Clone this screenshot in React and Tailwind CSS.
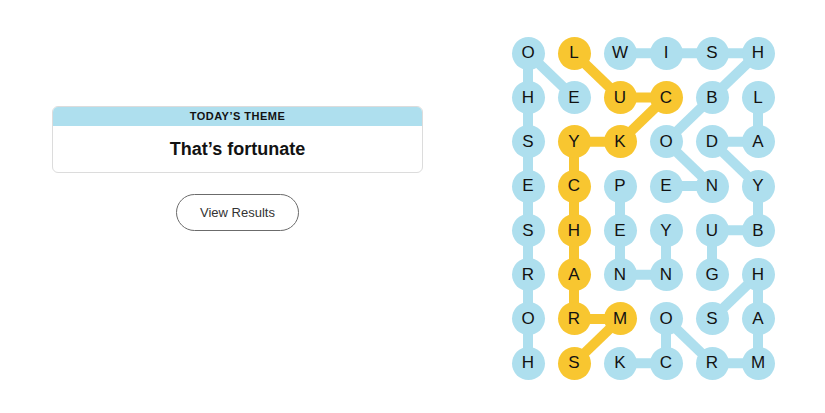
import React from "react";

const rows = ["OLWISH", "HEUCBL", "SYKODA", "ECPENY", "SHEYUB", "RANNGH", "ORMOSA", "HSKCRM"];

// cells on the spangram
const gold = new Set(["0,1", "1,2", "1,3", "2,2", "2,1", "3,1", "4,1", "5,1", "6,1", "6,2", "7,1"]);

const blueLinks = [
  [[0, 0], [1, 0]], [[1, 0], [2, 0]], [[2, 0], [3, 0]], [[3, 0], [4, 0]],
  [[4, 0], [5, 0]], [[5, 0], [6, 0]], [[6, 0], [7, 0]], [[0, 0], [1, 1]],
  [[0, 2], [0, 3]], [[0, 3], [0, 4]], [[0, 4], [0, 5]], [[0, 5], [1, 4]],
  [[1, 4], [2, 3]], [[2, 3], [3, 4]], [[3, 4], [3, 3]],
  [[1, 5], [2, 5]], [[2, 5], [2, 4]], [[2, 4], [3, 5]], [[3, 5], [4, 5]],
  [[4, 5], [4, 4]], [[4, 4], [5, 4]],
  [[3, 2], [4, 2]], [[4, 2], [5, 2]], [[5, 2], [5, 3]], [[5, 3], [4, 3]],
  [[6, 4], [5, 5]], [[5, 5], [6, 5]], [[6, 5], [7, 5]], [[7, 5], [7, 4]],
  [[7, 4], [6, 3]], [[6, 3], [7, 3]], [[7, 3], [7, 2]],
];

const goldLinks = [
  [[0, 1], [1, 2]], [[1, 2], [1, 3]], [[1, 3], [2, 2]], [[2, 2], [2, 1]],
  [[2, 1], [3, 1]], [[3, 1], [4, 1]], [[4, 1], [5, 1]], [[5, 1], [6, 1]],
  [[6, 1], [6, 2]], [[6, 2], [7, 1]],
];

const cx = (c) => 23 + 46 * c;
const cy = (r) => 22.15 + 44.3 * r;

const Board = () => (
  <div className="relative mt-[31px] ml-[82px]">
    <svg className="absolute inset-0" width="276" height="355">
      {blueLinks.map(([a, b], i) => (
        <line key={"b" + i} x1={cx(a[1])} y1={cy(a[0])} x2={cx(b[1])} y2={cy(b[0])} stroke="#aedfee" strokeWidth="10" />
      ))}
      {goldLinks.map(([a, b], i) => (
        <line key={"g" + i} x1={cx(a[1])} y1={cy(a[0])} x2={cx(b[1])} y2={cy(b[0])} stroke="#f8c630" strokeWidth="10" />
      ))}
    </svg>
    <div className="relative grid grid-cols-[repeat(6,46px)] auto-rows-[44.3px]">
      {rows.map((row, r) =>
        row.split("").map((ch, c) => (
          <div key={r + "-" + c} className="flex items-center justify-center">
            <div
              className={
                "w-[33px] h-[33px] rounded-full flex items-center justify-center text-[17px] text-[#121212] " +
                (gold.has(r + "," + c) ? "bg-[#f8c630]" : "bg-[#aedfee]")
              }
            >
              {ch}
            </div>
          </div>
        ))
      )}
    </div>
  </div>
);

export default function App() {
  return (
    <div className="w-[825px] h-[413px] bg-white flex items-start font-['Liberation_Sans',Arial,sans-serif] overflow-hidden">
      <div className="ml-[52px] mt-[106px] w-[371px] flex flex-col items-center">
        <div className="w-full rounded-[6px] border border-[#dcdcdc] overflow-hidden">
          <div className="h-[19px] bg-[#aedfee] flex items-center justify-center text-[11px] font-bold tracking-[0.5px] text-[#121212]">
            TODAY’S THEME
          </div>
          <div className="h-[46px] flex items-center justify-center text-[18px] font-bold text-[#121212]">
            That’s fortunate
          </div>
        </div>
        <button className="mt-[21px] w-[123px] h-[37px] rounded-full border border-[#6b6b6b] bg-white text-[13px] text-[#333]">
          View Results
        </button>
      </div>
      <Board />
    </div>
  );
}
